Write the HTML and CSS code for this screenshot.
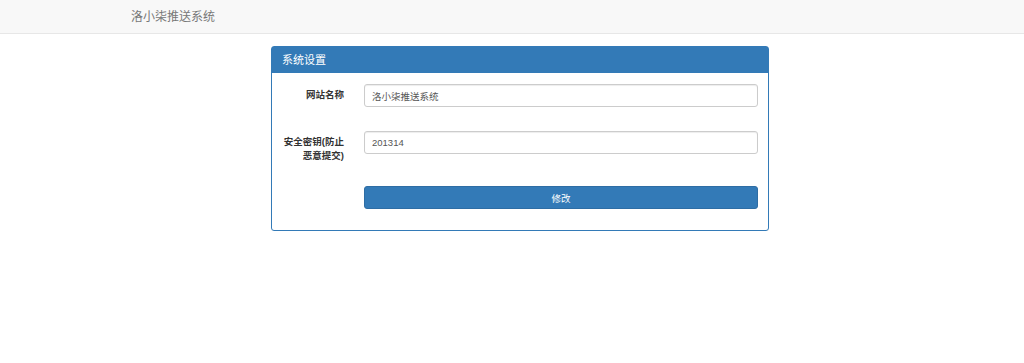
FILE: index.html
```html
<!DOCTYPE html>
<html lang="zh-CN">
<head>
    <meta charset="UTF-8">
    <meta name="viewport" content="width=device-width, initial-scale=1.0">
    <title>系统设置 - 洛小柒推送系统</title>
    <link rel="stylesheet" href="styles.css">
</head>
<body>
    <nav class="navbar">
        <a class="brand" href="#">洛小柒推送系统</a>
    </nav>

    <div class="container">
        <div class="panel">
            <div class="panel-heading">系统设置</div>
            <form class="panel-body">
                <div class="form-group">
                    <label for="siteName">网站名称</label>
                    <input type="text" id="siteName" value="洛小柒推送系统">
                </div>
                <div class="form-group">
                    <label for="secretKey">安全密钥(防止恶意提交)</label>
                    <input type="text" id="secretKey" value="201314">
                </div>
                <div class="form-group form-actions">
                    <span></span>
                    <button type="submit">修改</button>
                </div>
            </form>
        </div>
    </div>
</body>
</html>
```

FILE: styles.css
```css
body {
    margin: 0;
    font-family: "Liberation Sans", "Noto Sans CJK SC", Arial, sans-serif;
    font-size: 9.5px;
    line-height: 14px;
    color: #333;
    background: #fff;
}

.navbar {
    height: 33px;
    background-color: #f8f8f8;
    border-bottom: 1px solid #e7e7e7;
    display: flex;
    align-items: center;
}

.brand {
    margin-left: 131px;
    font-size: 12px;
    color: #777;
    text-decoration: none;
}

.container {
    width: 498px;
    margin: 12px auto 0 271px;
}

.panel {
    border: 1px solid #337ab7;
    border-radius: 3px;
    box-shadow: 0 1px 1px rgba(0, 0, 0, .05);
}

.panel-heading {
    height: 26px;
    padding: 0 10px;
    display: flex;
    align-items: center;
    background-color: #337ab7;
    color: #fff;
    font-size: 11px;
}

.panel-body {
    padding: 11px 10px 21px;
}

.form-group {
    display: grid;
    grid-template-columns: 62px 1fr;
    column-gap: 20px;
    margin-bottom: 24px;
}

.form-group:nth-child(2) {
    margin-bottom: 23px;
}

.form-actions {
    margin-bottom: 0;
}

label {
    padding-top: 4px;
    text-align: right;
    font-weight: bold;
}

input[type="text"] {
    height: 23px;
    padding: 0 7px;
    box-sizing: border-box;
    border: 1px solid #ccc;
    border-radius: 3px;
    box-shadow: inset 0 1px 1px rgba(0, 0, 0, .075);
    font-family: inherit;
    font-size: 9.5px;
    color: #555;
}

button {
    height: 23px;
    padding: 0;
    background-color: #337ab7;
    border: 1px solid #2e6da4;
    border-radius: 3px;
    color: #fff;
    font-family: inherit;
    font-size: 9.5px;
    cursor: pointer;
}

button:hover {
    background-color: #286090;
}
```
